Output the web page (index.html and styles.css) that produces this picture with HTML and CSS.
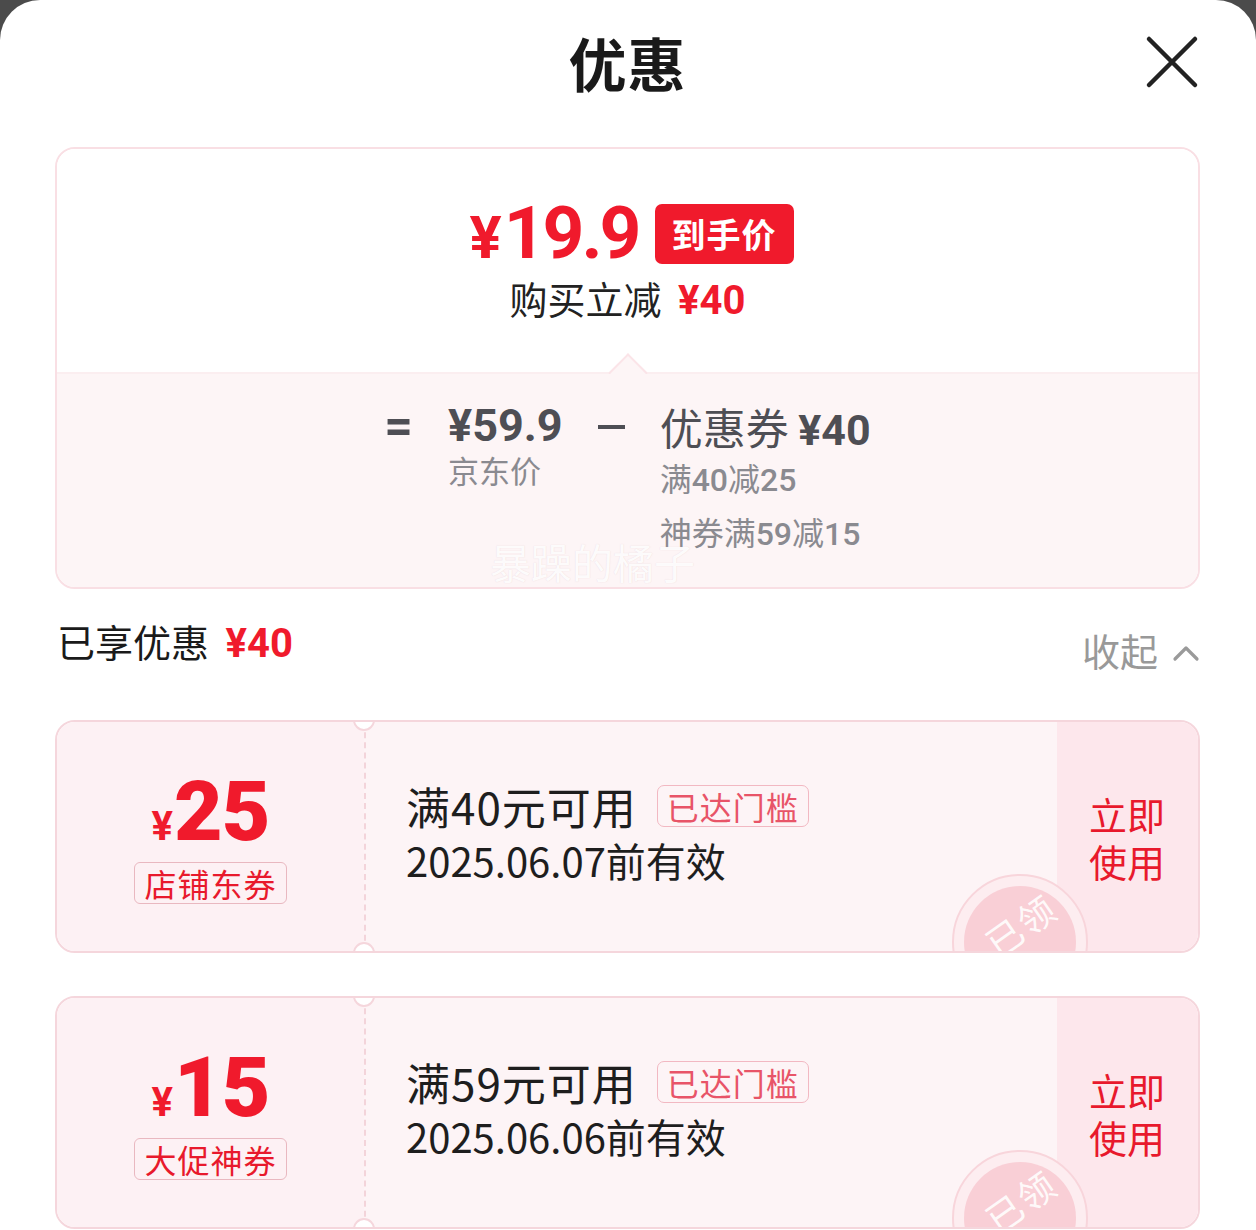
FILE: index.html
```html
<!DOCTYPE html>
<html lang="zh-CN">

<head>
    <meta charset="UTF-8">
    <meta name="viewport" content="width=device-width, initial-scale=1.0">
    <title>优惠</title>
    <link rel="stylesheet" href="styles.css">
</head>

<body>
    <div class="sheet">
        <header class="sheet-head">
            <h1 class="sheet-title">优惠</h1>
            <button class="close-btn" type="button" aria-label="关闭">
                <svg width="54" height="54" viewBox="0 0 54 54">
                    <path d="M4 4 L50 50 M50 4 L4 50" stroke="#222" stroke-width="4.5" stroke-linecap="round" fill="none" />
                </svg>
            </button>
        </header>

        <section class="summary">
            <div class="summary-top">
                <div class="final-price">
                    <span class="final-num"><span class="yen">¥</span>19.9</span>
                    <span class="final-tag">到手价</span>
                </div>
                <p class="cut-line">购买立减 <b>¥40</b></p>
                <i class="pointer"></i>
            </div>
            <div class="summary-calc">
                <span class="op">=</span>
                <div class="calc-col">
                    <p class="calc-main num">¥59.9</p>
                    <p class="calc-sub">京东价</p>
                </div>
                <span class="op op-minus"></span>
                <div class="calc-col">
                    <p class="calc-main">优惠券 <b class="num">¥40</b></p>
                    <p class="calc-sub rule first">满<b>40</b>减<b>25</b></p>
                    <p class="calc-sub rule">神券满<b>59</b>减<b>15</b></p>
                </div>
                <span class="watermark">暴躁的橘子</span>
            </div>
        </section>

        <div class="enjoyed">
            <p class="enjoyed-text">已享优惠 <b>¥40</b></p>
            <button class="fold-btn" type="button">收起
                <svg width="28" height="18" viewBox="0 0 28 18">
                    <path d="M3 15 L14 4 L25 15" stroke="#9a9a9a" stroke-width="3.2" stroke-linecap="round" stroke-linejoin="round" fill="none" />
                </svg>
            </button>
        </div>

        <div class="coupon">
            <div class="coupon-value">
                <p class="amount"><span class="amount-yen">¥</span>25</p>
                <span class="coupon-type">店铺东券</span>
            </div>
            <div class="coupon-info">
                <p class="coupon-rule">满40元可用 <span class="reached">已达门槛</span></p>
                <p class="coupon-date">2025.06.07前有效</p>
            </div>
            <div class="coupon-use">立即<br>使用</div>
            <i class="notch notch-top"></i>
            <i class="notch notch-bottom"></i>
            <span class="stamp"><span class="stamp-inner"><em>已领</em></span></span>
        </div>

        <div class="coupon">
            <div class="coupon-value">
                <p class="amount"><span class="amount-yen">¥</span>15</p>
                <span class="coupon-type">大促神券</span>
            </div>
            <div class="coupon-info">
                <p class="coupon-rule">满59元可用 <span class="reached">已达门槛</span></p>
                <p class="coupon-date">2025.06.06前有效</p>
            </div>
            <div class="coupon-use">立即<br>使用</div>
            <i class="notch notch-top"></i>
            <i class="notch notch-bottom"></i>
            <span class="stamp"><span class="stamp-inner"><em>已领</em></span></span>
        </div>
    </div>
</body>

</html>
```

FILE: styles.css
```css
* {
    margin: 0;
    padding: 0;
    box-sizing: border-box;
}

body {
    font-family: "Noto Sans CJK SC", "Noto Sans", sans-serif;
    background: #4b4b4b;
    color: #222;
    overflow: hidden;
}

.num {
    font-family: Roboto, "Noto Sans CJK SC", sans-serif;
}

.sheet {
    background: white;
    border-radius: 40px 40px 0 0;
    min-height: 1300px;
    padding: 0 56px 40px 55px;
}

/* header */
.sheet-head {
    height: 124px;
    display: flex;
    justify-content: center;
    align-items: center;
    position: relative;
}

.sheet-title {
    font-size: 58px;
    font-weight: bold;
    color: #1a1a1a;
    letter-spacing: 1px;
}

.close-btn {
    position: absolute;
    right: 1px;
    top: 35px;
    border: none;
    background: none;
    width: 54px;
    height: 54px;
    cursor: pointer;
}

/* summary card */
.summary {
    margin-top: 23px;
    border: 2px solid #f9dfe4;
    border-radius: 20px;
    overflow: hidden;
    position: relative;
}

.summary-top {
    background: white;
    padding: 44px 0 49px;
    display: flex;
    flex-direction: column;
    align-items: center;
    gap: 3px;
    position: relative;
    border-bottom: 2px solid #fbeef0;
}

.final-price {
    display: flex;
    align-items: center;
    gap: 16px;
    height: 80px;
    margin-left: 8px;
}

.final-num {
    font-family: Roboto, "Noto Sans CJK SC", sans-serif;
    font-size: 73px;
    font-weight: bold;
    color: #f01a2c;
    letter-spacing: -3px;
}

.final-num .yen {
    font-size: 60px;
    margin-right: 5px;
}

.final-tag {
    background: #f01a2c;
    color: white;
    font-size: 34px;
    font-weight: bold;
    border-radius: 7px;
    padding: 0 17px;
    height: 60px;
    line-height: 60px;
    letter-spacing: 1px;
    margin-top: 2px;
}

.cut-line {
    font-size: 38px;
    line-height: 44px;
    color: #222;
}

.cut-line b {
    font-family: Roboto, "Noto Sans CJK SC", sans-serif;
    font-size: 40px;
    color: #f01a2c;
    margin-left: 8px;
}

.pointer {
    position: absolute;
    left: 50%;
    bottom: -15px;
    width: 28px;
    height: 28px;
    margin-left: -14px;
    background: #fdf5f6;
    border-left: 2px solid #fbe4e8;
    border-top: 2px solid #fbe4e8;
    transform: rotate(45deg);
}

.summary-calc {
    background: #fdf5f6;
    display: flex;
    justify-content: center;
    align-items: flex-start;
    gap: 35px;
    padding: 31px 0 29px;
    position: relative;
}

.op {
    font-family: Roboto, sans-serif;
    font-size: 50px;
    font-weight: bold;
    color: #4e4e54;
    line-height: 42px;
    height: 42px;
}

.op-minus {
    width: 27px;
    height: 4px;
    background: #4e4e54;
    margin-top: 20px;
}

.calc-col {
    display: flex;
    flex-direction: column;
}

.calc-main {
    font-size: 43px;
    line-height: 42px;
    height: 42px;
    color: #4e4e54;
    white-space: nowrap;
}

p.calc-main.num,
.calc-main b {
    font-weight: bold;
}

p.calc-main.num {
    font-size: 45px;
}

.calc-sub {
    font-size: 31px;
    line-height: 46px;
    height: 46px;
    color: #8a8a90;
    white-space: nowrap;
}

.calc-sub.rule {
    font-size: 32px;
    line-height: 54px;
    height: 54px;
}

.calc-sub.rule.first {
    margin-top: 3px;
}

.calc-sub.rule b {
    font-family: Roboto, sans-serif;
    font-weight: 500;
}

.watermark {
    position: absolute;
    left: 433px;
    bottom: -4px;
    font-size: 41px;
    color: rgba(255, 255, 255, 0.92);
    text-shadow: 0 0 1px rgba(220, 190, 196, 0.6);
}

/* enjoyed row */
.enjoyed {
    display: flex;
    justify-content: space-between;
    align-items: flex-start;
    height: 131px;
    padding-top: 30px;
}

.enjoyed-text {
    font-size: 38px;
    line-height: 44px;
    color: #1a1a1a;
    padding-left: 2px;
}

.enjoyed-text b {
    font-family: Roboto, sans-serif;
    font-size: 40px;
    color: #f01a2c;
    margin-left: 8px;
}

.fold-btn {
    border: none;
    background: none;
    font-family: "Noto Sans CJK SC", sans-serif;
    font-size: 38px;
    color: #999;
    display: flex;
    align-items: center;
    gap: 14px;
    margin-top: 9px;
    line-height: 44px;
}

.fold-btn svg {
    margin-top: 6px;
}

/* coupons */
.coupon {
    height: 233px;
    border: 2px solid #f5d6dc;
    border-radius: 20px;
    display: grid;
    grid-template-columns: 307px 1fr 141px;
    position: relative;
    overflow: hidden;
    margin-bottom: 43px;
}

.coupon-value {
    background: #fdf1f4;
    display: flex;
    flex-direction: column;
    align-items: center;
    justify-content: center;
    padding-top: 2px;
}

.amount {
    font-family: Roboto, sans-serif;
    font-size: 84px;
    font-weight: 900;
    color: #f01a2c;
    line-height: 82px;
    letter-spacing: -1px;
}

.amount-yen {
    font-size: 40px;
    font-weight: bold;
    margin-right: 2px;
}

.coupon-type {
    font-size: 32px;
    color: #e8192c;
    border: 1.5px solid #e9b8c0;
    border-radius: 6px;
    padding: 0 9px;
    line-height: 40px;
    letter-spacing: 1px;
    margin-top: -6px;
}

.coupon-info {
    background: #fdf4f6;
    border-left: 2px dashed #f3d4da;
    padding-left: 40px;
    display: flex;
    flex-direction: column;
    justify-content: center;
    gap: 4px;
    padding-bottom: 8px;
}

.coupon-rule {
    font-size: 44px;
    line-height: 50px;
    color: #1e1e1e;
    display: flex;
    align-items: center;
    gap: 20px;
    letter-spacing: 1px;
}

.reached {
    font-size: 32px;
    line-height: 40px;
    color: #e85468;
    border: 1.5px solid #f2b8c2;
    border-radius: 7px;
    padding: 0 9px;
    letter-spacing: 1px;
}

.coupon-date {
    font-size: 40px;
    line-height: 50px;
    color: #1e1e1e;
}

.coupon-use {
    background: #fde7ec;
    color: #e8192c;
    font-size: 38px;
    line-height: 47px;
    display: flex;
    align-items: center;
    padding-left: 32px;
}

.notch {
    position: absolute;
    left: 296px;
    width: 22px;
    height: 22px;
    border-radius: 50%;
    background: white;
    border: 2px solid #f5d6dc;
}

.notch-top {
    top: -13px;
}

.notch-bottom {
    bottom: -13px;
}

.stamp {
    position: absolute;
    left: 895px;
    top: 152px;
    width: 136px;
    height: 136px;
    border-radius: 50%;
    background: #fdedf0;
    border: 2px solid #f8d5db;
    display: flex;
    align-items: center;
    justify-content: center;
}

.stamp-inner {
    width: 112px;
    height: 112px;
    border-radius: 50%;
    background: #f9cfd6;
    display: flex;
    align-items: center;
    justify-content: center;
}

.stamp-inner em {
    font-style: normal;
    color: rgba(255, 255, 255, 0.9);
    font-size: 36px;
    letter-spacing: 2px;
    transform: translateY(-18px) rotate(-35deg);
}
```
